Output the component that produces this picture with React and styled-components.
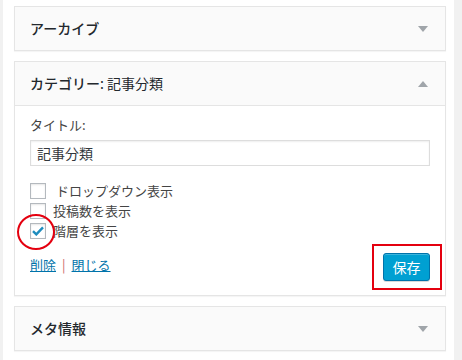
import React from 'react';
import styled, { createGlobalStyle, css } from 'styled-components';

const GlobalStyle = createGlobalStyle`
  html, body {
    margin: 0;
    padding: 0;
    background: #f1f1f1;
  }
  body {
    font-family: "Noto Sans CJK JP", "Noto Sans", sans-serif;
    color: #23282d;
  }
`;

const Page = styled.div`
  margin-left: 3px;
  width: 451px;
  height: 360px;
  box-sizing: border-box;
  background: #fff;
  padding: 6px 8px 0 11px;
  overflow: hidden;
`;

const Widget = styled.div`
  border: 1px solid #e5e5e5;
  background: #fff;
  box-shadow: 0 1px 1px rgba(0, 0, 0, 0.04);
  margin-bottom: 10px;
`;

const WidgetTop = styled.div`
  display: flex;
  align-items: center;
  justify-content: space-between;
  height: 43px;
  padding: 0 15px;
  background: #fafafa;
  border-bottom: ${p => (p.$open ? '1px solid #e5e5e5' : 'none')};
`;

const Title = styled.h3`
  margin: 0 0 2px;
  font-size: 14px;
  font-weight: 500;
  line-height: 1;
  color: #23282d;

  span {
    font-weight: 400;
  }
`;

const Arrow = styled.span`
  width: 0;
  height: 0;
  margin-right: 2px;
  border-left: 5px solid transparent;
  border-right: 5px solid transparent;
  ${p =>
    p.$up
      ? css`border-bottom: 6px solid #a0a5aa;`
      : css`border-top: 6px solid #a0a5aa;`}
`;

const Body = styled.div`
  display: flex;
  flex-direction: column;
  padding: 10px 15px 14px;
`;

const Label = styled.label`
  font-size: 13px;
  line-height: 18px;
  color: #444;
`;

const TextInput = styled.input`
  margin-top: 6px;
  width: 100%;
  height: 26px;
  box-sizing: border-box;
  border: 1px solid #ddd;
  box-shadow: inset 0 1px 2px rgba(0, 0, 0, 0.07);
  padding: 0 6px;
  font-family: inherit;
  font-size: 14px;
  color: #32373c;
  outline: none;
`;

const Options = styled.div`
  margin-top: 17px;
  display: flex;
  flex-direction: column;
`;

const OptionRow = styled.label`
  display: flex;
  align-items: flex-start;
  height: 20px;
  font-size: 13px;
  line-height: 16px;
  color: #444;
`;

const Box = styled.span`
  position: relative;
  flex: none;
  width: 16px;
  height: 16px;
  box-sizing: border-box;
  border: 1px solid #b4b9be;
  background: #fff;
  box-shadow: inset 0 1px 2px rgba(0, 0, 0, 0.1);
  margin-right: 7px;
  display: flex;
  align-items: center;
  justify-content: center;
`;

const Circle = styled.span`
  position: absolute;
  left: -14px;
  top: -10px;
  width: 38px;
  height: 36px;
  box-sizing: border-box;
  border: 2px solid #e4000f;
  border-radius: 50%;
`;

const Footer = styled.div`
  margin-top: 10px;
  display: flex;
  align-items: flex-start;
  justify-content: space-between;
`;

const Actions = styled.div`
  margin-top: 3px;
  font-size: 13px;
  line-height: 18px;
  color: #c66;
`;

const ActionLink = styled.a`
  color: #0073aa;
  text-decoration: underline;
`;

const Sep = styled.span`
  margin: 0 6px;
`;

const SaveWrap = styled.div`
  position: relative;
`;

const SaveButton = styled.button`
  width: 47px;
  height: 28px;
  padding: 0;
  border: 1px solid #0073aa;
  border-radius: 3px;
  background: #00a0d2;
  box-shadow: inset 0 1px 0 rgba(120, 200, 230, 0.5), 0 1px 0 rgba(0, 0, 0, 0.15);
  color: #fff;
  font-family: inherit;
  font-size: 14px;
  line-height: 1;
`;

const Highlight = styled.span`
  position: absolute;
  left: -11px;
  top: -9px;
  right: -12px;
  bottom: -9px;
  border: 2px solid #e4000f;
  pointer-events: none;
`;

const Check = () => (
  <svg width="12" height="10" viewBox="0 0 12 10">
    <path d="M1 5.2 L4.3 8.4 L11 1.4" fill="none" stroke="#1e8cbe" strokeWidth="2.4" />
  </svg>
);

const Option = ({ checked, marked, children }) => (
  <OptionRow>
    <Box>
      {checked && <Check />}
      {marked && <Circle />}
    </Box>
    {children}
  </OptionRow>
);

const App = () => (
  <Page>
    <GlobalStyle />
    <Widget>
      <WidgetTop>
        <Title>アーカイブ</Title>
        <Arrow />
      </WidgetTop>
    </Widget>

    <Widget>
      <WidgetTop $open>
        <Title>
          カテゴリー<span>: 記事分類</span>
        </Title>
        <Arrow $up />
      </WidgetTop>
      <Body>
        <Label>タイトル:</Label>
        <TextInput defaultValue="記事分類" />
        <Options>
          <Option>&nbsp;ドロップダウン表示</Option>
          <Option>投稿数を表示</Option>
          <Option checked marked>
            階層を表示
          </Option>
        </Options>
        <Footer>
          <Actions>
            <ActionLink href="#">削除</ActionLink>
            <Sep>|</Sep>
            <ActionLink href="#">閉じる</ActionLink>
          </Actions>
          <SaveWrap>
            <SaveButton>保存</SaveButton>
            <Highlight />
          </SaveWrap>
        </Footer>
      </Body>
    </Widget>

    <Widget>
      <WidgetTop>
        <Title>メタ情報</Title>
        <Arrow />
      </WidgetTop>
    </Widget>
  </Page>
);

export default App;
